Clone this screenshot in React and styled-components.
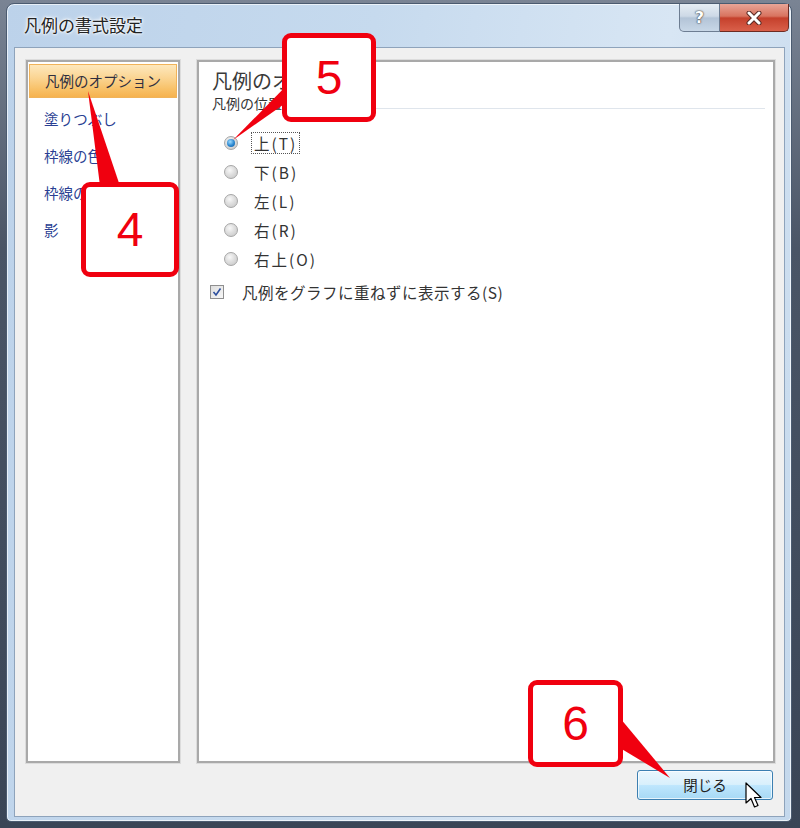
import React from 'react';
import styled, { createGlobalStyle } from 'styled-components';

const JP = `"Noto Sans CJK JP", "Noto Sans", sans-serif`;

const GlobalStyle = createGlobalStyle`
  html, body {
    margin: 0;
    padding: 0;
  }
  body {
    width: 800px;
    height: 828px;
    overflow: hidden;
    background: linear-gradient(180deg, #7a8494 0%, #4a5566 30%, #3a4556 100%);
    font-family: ${JP};
  }
`;

const Stage = styled.div`
  position: relative;
  width: 800px;
  height: 828px;
  box-sizing: border-box;
  padding: 3px 8px 6px 6px;
`;

const Window = styled.div`
  height: 100%;
  box-sizing: border-box;
  display: flex;
  flex-direction: column;
  border: 1px solid #4b5b70;
  border-radius: 8px 8px 5px 5px;
  padding: 0 6px 4px 7px;
  background: linear-gradient(100deg, #bcd2ea 0%, #c6daee 40%, #d8e6f4 72%, #c4d8ec 100%);
  box-shadow: inset 0 0 0 1px rgba(255, 255, 255, 0.65);
`;

const TitleBar = styled.div`
  height: 43px;
  display: flex;
  align-items: flex-start;
  justify-content: space-between;
`;

const TitleText = styled.div`
  padding: 10px 0 0 10px;
  font: 17px/22px ${JP};
  color: #222;
  text-shadow: 0 0 5px #fff, 0 0 3px #fff, 0 0 2px #fff;
`;

const CaptionButtons = styled.div`
  display: flex;
  margin-right: -4px;
`;

const CaptionButton = styled.div`
  width: ${p => p.$w}px;
  height: 28px;
  box-sizing: border-box;
  display: flex;
  align-items: center;
  justify-content: center;
  border: 1px solid ${p => (p.$danger ? '#6d2b22' : '#6d7d92')};
  border-top: none;
  border-left: ${p => (p.$danger ? 'none' : undefined)};
  border-radius: ${p => (p.$danger ? '0 0 5px 0' : '0 0 0 5px')};
  background: ${p =>
    p.$danger
      ? 'linear-gradient(180deg, #e9a597 0%, #d8735f 45%, #c5402c 52%, #d9604a 100%)'
      : 'linear-gradient(180deg, #e6edf4 0%, #cdd9e6 45%, #b3c4d7 52%, #c8d7e7 100%)'};
  color: #fff;
  font: bold 16px/1 "DejaVu Sans", sans-serif;
  text-shadow: 0 0 2px #333, 0 0 1px #333;
`;

const Client = styled.div`
  flex: 1;
  display: flex;
  flex-direction: column;
  background: #f0f0f0;
  border: 1px solid #8ea3bb;
  padding: 12px 9px 0 11px;
`;

const Panels = styled.div`
  height: 703px;
  display: flex;
  gap: 17px;
`;

const Panel = styled.div`
  box-sizing: border-box;
  background: #fff;
  border: 2px solid #a9a9a9;
  box-shadow: 0 0 0 1px #dcdcdc;
  ${p => (p.$grow ? 'flex: 1;' : `width: ${p.$w}px;`)}
  padding: ${p => p.$pad};
  display: flex;
  flex-direction: column;
`;

const NavItem = styled.div`
  box-sizing: border-box;
  height: ${p => (p.$active ? 34 : 37)}px;
  margin-bottom: ${p => (p.$active ? 3 : 0)}px;
  display: flex;
  align-items: center;
  padding-left: 15px;
  font: 14.5px/1 ${JP};
  color: ${p => (p.$active ? '#2f2f3f' : '#2a3f93')};
  white-space: nowrap;
  overflow: hidden;
  ${p =>
    p.$active &&
    `
    border: 1px solid #f0b35a;
    background: linear-gradient(180deg, #fde8bd 0%, #fbd593 40%, #f8c168 75%, #f6b24e 100%);
  `}
`;

const PageTitle = styled.div`
  font: 20px/24px ${JP};
  color: #3a3a3a;
  white-space: nowrap;
`;

const SectionHead = styled.div`
  display: flex;
  align-items: flex-end;
  margin-top: 1px;
  font: 14px/18px ${JP};
  color: #333;
`;

const Rule = styled.div`
  flex: 1;
  height: 1px;
  margin: 0 0 3px 6px;
  background: #dfe5ec;
`;

const OptionList = styled.div`
  display: flex;
  flex-direction: column;
  margin: 16px 0 0 12px;
`;

const OptionRow = styled.div`
  height: 29px;
  display: flex;
  align-items: center;
  gap: 13px;
`;

const RadioMark = styled.span`
  position: relative;
  width: 14px;
  height: 14px;
  box-sizing: border-box;
  border-radius: 50%;
  border: 1px solid #a6a6a6;
  background: radial-gradient(circle at 40% 35%, #f8f8f8 0%, #dedede 45%, #c4c4c4 100%);
  &::after {
    content: '';
    display: ${p => (p.$checked ? 'block' : 'none')};
    position: absolute;
    left: 2px;
    top: 2px;
    width: 8px;
    height: 8px;
    border-radius: 50%;
    background: radial-gradient(circle at 40% 35%, #9fdcff 0%, #2a86cf 55%, #145a9c 100%);
  }
`;

const OptionLabel = styled.span`
  padding: 1px 2px;
  border: 1px dotted ${p => (p.$focus ? '#555' : 'transparent')};
  font: 15.5px/18px ${JP};
  color: #333;
  letter-spacing: ${p => p.$spacing || 0.5}px;
`;

const CheckRow = styled.div`
  height: 24px;
  margin: 7px 0 0 -2px;
  display: flex;
  align-items: center;
  gap: 15px;
`;

const CheckMark = styled.span`
  width: 14px;
  height: 14px;
  box-sizing: border-box;
  border: 1px solid #8f8f8f;
  background: linear-gradient(135deg, #dedede 0%, #f7f7f7 100%);
  display: flex;
  align-items: center;
  justify-content: center;
`;

const Footer = styled.div`
  display: flex;
  justify-content: flex-end;
  padding: 7px 2px 16px 0;
`;

const CloseButton = styled.button`
  position: relative;
  width: 136px;
  height: 30px;
  border: 1px solid #3c7fb1;
  border-radius: 3px;
  background: linear-gradient(180deg, #eaf6fd 0%, #d9f0fc 48%, #bee6fd 52%, #a7d9f5 100%);
  box-shadow: inset 0 0 0 1px rgba(255, 255, 255, 0.7);
  font: 14.5px/1 ${JP};
  color: #222;
  padding: 0;
`;

const Cursor = styled.svg`
  position: absolute;
  left: 107px;
  top: 11px;
`;

const Pointers = styled.svg`
  position: absolute;
  left: 0;
  top: 0;
  pointer-events: none;
  z-index: 2;
`;

const Callout = styled.div`
  position: absolute;
  left: ${p => p.$x}px;
  top: ${p => p.$y}px;
  width: ${p => p.$w}px;
  height: ${p => p.$h}px;
  box-sizing: border-box;
  border: 5px solid #f0000f;
  border-radius: 9px;
  background: #fff;
  display: flex;
  align-items: center;
  justify-content: center;
  color: #f0000f;
  font: 48px/1 "Liberation Sans", Arial, sans-serif;
  z-index: 3;
`;

const navItems = ['凡例のオプション', '塗りつぶし', '枠線の色', '枠線のスタイル', '影'];
const positions = ['上(T)', '下(B)', '左(L)', '右(R)', '右上(O)'];

export default function App() {
  return (
    <>
      <GlobalStyle />
      <Stage>
        <Window>
          <TitleBar>
            <TitleText>凡例の書式設定</TitleText>
            <CaptionButtons>
              <CaptionButton $w={41}>?</CaptionButton>
              <CaptionButton $w={69} $danger>
                <svg width="16" height="14" viewBox="0 0 16 14">
                  <path d="M3 2 L13 12 M13 2 L3 12" stroke="#5a2a24" strokeWidth="5" strokeLinecap="round" />
                  <path d="M3 2 L13 12 M13 2 L3 12" stroke="#fff" strokeWidth="3" strokeLinecap="round" />
                </svg>
              </CaptionButton>
            </CaptionButtons>
          </TitleBar>
          <Client>
            <Panels>
              <Panel $w={154} $pad="2px 1px">
                {navItems.map((item, i) => (
                  <NavItem key={item} $active={i === 0}>
                    {item}
                  </NavItem>
                ))}
              </Panel>
              <Panel $grow $pad="7px 8px 0 13px">
                <PageTitle>凡例のオプション</PageTitle>
                <SectionHead>
                  凡例の位置
                  <Rule />
                </SectionHead>
                <OptionList>
                  {positions.map((label, i) => (
                    <OptionRow key={label}>
                      <RadioMark $checked={i === 0} />
                      <OptionLabel $focus={i === 0} $spacing={2}>
                        {label}
                      </OptionLabel>
                    </OptionRow>
                  ))}
                </OptionList>
                <CheckRow>
                  <CheckMark>
                    <svg width="10" height="10" viewBox="0 0 10 10">
                      <path d="M1.5 5 L4 8 L8.5 1.5" fill="none" stroke="#2d4f9e" strokeWidth="1.6" />
                    </svg>
                  </CheckMark>
                  <OptionLabel>凡例をグラフに重ねずに表示する(S)</OptionLabel>
                </CheckRow>
              </Panel>
            </Panels>
            <Footer>
              <CloseButton>
                閉じる
                <Cursor width="20" height="28" viewBox="0 0 20 28">
                  <path
                    d="M1 1 L1 21 L6 16.5 L9.5 25 L13 23.5 L9.5 15.5 L16 15.5 Z"
                    fill="#fff"
                    stroke="#000"
                    strokeWidth="1.2"
                    strokeLinejoin="round"
                  />
                </Cursor>
              </CloseButton>
            </Footer>
          </Client>
        </Window>

        <Pointers width="800" height="828" viewBox="0 0 800 828">
          <polygon points="292,80 290,100 233,140" fill="#f0000f" />
          <polygon points="100,186 120,186 88,91" fill="#f0000f" />
          <polygon points="620,718 620,748 670,778" fill="#f0000f" />
        </Pointers>
        <Callout $x={282} $y={33} $w={94} $h={89}>5</Callout>
        <Callout $x={81} $y={182} $w={98} $h={95}>4</Callout>
        <Callout $x={528} $y={680} $w={95} $h={87}>6</Callout>
      </Stage>
    </>
  );
}
